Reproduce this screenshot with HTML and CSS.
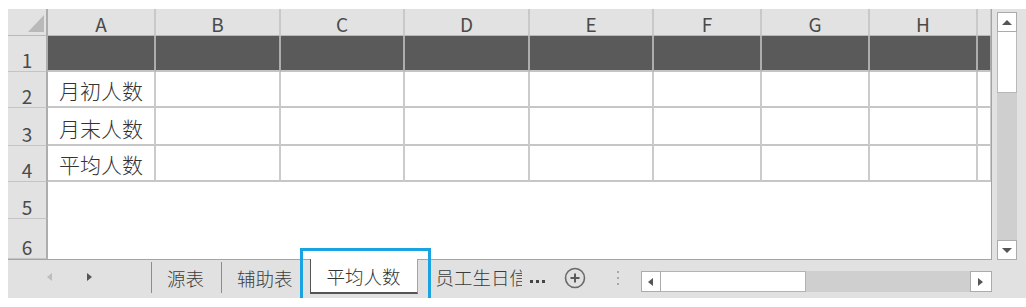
FILE: index.html
```html
<!DOCTYPE html>
<html lang="zh-CN">
<head>
  <meta charset="UTF-8" />
  <meta name="viewport" content="width=device-width, initial-scale=1" />
  <title>平均人数</title>
  <link rel="stylesheet" href="styles.css">
</head>
<body>

  <div class="app">
    <div class="main">
      <div class="grid">
        <table class="sheet">
          <colgroup>
            <col class="c-num"><col class="c-a"><col class="c-w"><col class="c-v"><col class="c-w"><col class="c-v">
            <col class="c-a"><col class="c-a"><col class="c-a"><col class="c-i">
          </colgroup>
          <thead>
            <tr class="head">
              <th class="corner"><div class="corner-tri"></div></th>
              <th>A</th><th>B</th><th>C</th><th>D</th><th>E</th><th>F</th><th>G</th><th>H</th><th></th>
            </tr>
          </thead>
          <tbody>
            <tr class="fill r36">
              <th class="num">1</th>
              <td></td><td></td><td></td><td></td><td></td><td></td><td></td><td></td><td></td>
            </tr>
            <tr class="data r36">
              <th class="num">2</th>
              <td class="label">月初人数</td><td></td><td></td><td></td><td></td><td></td><td></td><td></td><td></td>
            </tr>
            <tr class="data r38">
              <th class="num">3</th>
              <td class="label">月末人数</td><td></td><td></td><td></td><td></td><td></td><td></td><td></td><td></td>
            </tr>
            <tr class="data r36">
              <th class="num">4</th>
              <td class="label">平均人数</td><td></td><td></td><td></td><td></td><td></td><td></td><td></td><td></td>
            </tr>
            <tr class="blank r37">
              <th class="num">5</th>
              <td></td><td></td><td></td><td></td><td></td><td></td><td></td><td></td><td></td>
            </tr>
            <tr class="blank r40">
              <th class="num">6</th>
              <td></td><td></td><td></td><td></td><td></td><td></td><td></td><td></td><td></td>
            </tr>
          </tbody>
        </table>
      </div>

      <div class="vscroll">
        <div class="vtrack">
          <div class="sbtn"><span class="tri-up"></span></div>
          <div class="vthumb"></div>
          <div class="spacer"></div>
          <div class="sbtn"><span class="tri-down"></span></div>
        </div>
      </div>
    </div>

    <div class="tabbar">
      <div class="nav">
        <span class="tri-left off"></span>
        <span class="tri-right"></span>
      </div>
      <div class="tab plain">源表</div>
      <div class="tab plain">辅助表</div>
      <div class="tab active">平均人数</div>
      <div class="tab cut">员工生日信息</div>
      <div class="more"><i></i><i></i><i></i></div>
      <div class="add">
        <svg width="22" height="22" viewBox="0 0 22 22">
          <circle cx="11" cy="11" r="9.5" fill="none" stroke="#6a6a6a" stroke-width="1.6"/>
          <path d="M11 6.5v9M6.5 11h9" stroke="#5a5a5a" stroke-width="2"/>
        </svg>
      </div>
      <div class="vdots"><i></i><i></i><i></i></div>
      <div class="hscroll">
        <div class="sbtn wide"><span class="tri-left small"></span></div>
        <div class="hthumb"></div>
        <div class="spacer"></div>
        <div class="sbtn end"><span class="tri-right small"></span></div>
      </div>
    </div>

    <div class="focus"></div>
  </div>

</body>
</html>
```

FILE: styles.css
```css
body {
  margin: 0;
  background: #fff;
  font-family: "Noto Sans CJK SC", "Liberation Sans", sans-serif;
  color: #333;
}

.app {
  position: relative;
  margin: 9px 0 0 8px;
  width: 1018px;
}

.main {
  display: flex;
  height: 251px;
}

/* sheet grid */
.grid {
  width: 984px;
  height: 251px;
  box-sizing: border-box;
  overflow: hidden;
  border-right: 1px solid #a4a4a4;
  border-bottom: 1px solid #a4a4a4;
  background: #fff;
}

.sheet {
  width: 983px;
  table-layout: fixed;
  border-spacing: 0;
}

.c-num { width: 40px; }
.c-a { width: 108px; }
.c-w { width: 125px; }
.c-v { width: 124px; }
.c-i { width: 14px; }

.sheet th,
.sheet td {
  padding: 0;
  box-sizing: border-box;
  vertical-align: bottom;
}

.head { height: 27px; }
.r36 { height: 36px; }
.r37 { height: 37px; }
.r38 { height: 38px; }
.r40 { height: 40px; }

.head th {
  background: #e2e2e2;
  border-right: 2px solid #c9c9c9;
  border-bottom: 1px solid #b8b8b8;
  font-weight: normal;
  font-size: 19px;
  line-height: 22px;
  color: #4a4a4a;
  text-align: center;
}

.head th.corner {
  border-right: 2px solid #adadad;
  padding: 0 2px 3px 0;
}

.corner-tri {
  width: 16px;
  height: 17px;
  margin-left: auto;
  background: #b9b9b9;
  clip-path: polygon(100% 0, 100% 100%, 0 100%);
}

.sheet th.num {
  background: #e2e2e2;
  border-right: 2px solid #adadad;
  border-bottom: 1px solid #c4c4c4;
  font-weight: normal;
  font-size: 19px;
  line-height: 22px;
  color: #4a4a4a;
  text-align: center;
}

.fill td {
  background: #5a5a5a;
  border-right: 2px solid #adadad;
  border-bottom: 2px solid #c4c4c4;
}

.data td {
  border-right: 2px solid #cbcbcb;
  border-bottom: 2px solid #c6c6c6;
}

.label {
  font-size: 21px;
  font-weight: 300;
  line-height: 26px;
  text-align: center;
  padding-bottom: 3px !important;
  color: #333;
  white-space: nowrap;
}

/* vertical scrollbar */
.vscroll {
  width: 34px;
  background: #e2e2e2;
  padding: 3px 0 0 5px;
  box-sizing: border-box;
  display: flex;
}

.vtrack {
  width: 20px;
  background: #cfcfcf;
  display: flex;
  flex-direction: column;
}

.sbtn {
  width: 20px;
  height: 20px;
  flex: none;
  box-sizing: border-box;
  background: #fff;
  border: 1px solid #ababab;
  display: flex;
  align-items: center;
  justify-content: center;
}

.vthumb {
  height: 61px;
  background: #fff;
  border: 1px solid #b8b8b8;
  border-top: none;
  box-sizing: border-box;
}

.spacer {
  flex: 1;
}

.tri-up {
  border-left: 5px solid transparent;
  border-right: 5px solid transparent;
  border-bottom: 5px solid #555;
}

.tri-down {
  border-left: 5px solid transparent;
  border-right: 5px solid transparent;
  border-top: 5px solid #555;
}

.tri-left {
  border-top: 4px solid transparent;
  border-bottom: 4px solid transparent;
  border-right: 5px solid #555;
}

.tri-right {
  border-top: 4px solid transparent;
  border-bottom: 4px solid transparent;
  border-left: 5px solid #555;
}

.tri-left.off {
  border-right-color: #bdbdbd;
}

.small {
  border-top-width: 4px;
  border-bottom-width: 4px;
}

/* sheet tabs */
.tabbar {
  display: flex;
  height: 38px;
  background: #e1e1e1;
  font-size: 18.5px;
  font-weight: 300;
  color: #3c3c3c;
}

.nav {
  width: 143px;
  display: flex;
  align-items: center;
  gap: 35px;
  padding: 0 0 4px 39px;
  box-sizing: border-box;
}

.tab {
  display: flex;
  align-items: center;
  white-space: nowrap;
}

.tab.plain {
  border-left: 1px solid #8c8c8c;
  margin: 2px 0 5px;
  padding: 0 17px 0 15px;
}

.tab.active {
  position: relative;
  width: 108px;
  margin: -1px 0 4px;
  justify-content: center;
  background: #fff;
  color: #333;
  border-left: 1px solid #555;
  border-right: 1px solid #a3a3a3;
  border-bottom: 2px solid #555;
  box-sizing: border-box;
}

.tab.cut {
  width: 104px;
  padding-left: 18px;
  margin-bottom: 5px;
  overflow: hidden;
  box-sizing: border-box;
}

.more {
  margin-left: 8px;
  display: flex;
  gap: 3px;
  align-items: center;
  padding-top: 4px;
}

.more i {
  width: 3px;
  height: 3px;
  background: #444;
}

.add {
  margin-left: 19px;
  display: flex;
  align-items: center;
  padding-bottom: 2px;
}

.vdots {
  margin-left: 31px;
  display: flex;
  flex-direction: column;
  justify-content: center;
  gap: 4px;
  padding-bottom: 2px;
}

.vdots i {
  width: 2px;
  height: 2px;
  background: #aaa;
}

.hscroll {
  margin: 11px 0 0 22px;
  width: 351px;
  height: 21px;
  display: flex;
  background: #cfcfcf;
}

.hscroll .sbtn {
  height: 21px;
}

.hscroll .sbtn.end {
  width: 22px;
}

.hthumb {
  width: 145px;
  background: #fff;
  border: 1px solid #b3b3b3;
  border-left: none;
  box-sizing: border-box;
}

/* highlight around the active sheet */
.focus {
  position: absolute;
  left: 292px;
  top: 239px;
  width: 131px;
  height: 55px;
  box-sizing: border-box;
  border: 3px solid #19a3e0;
}
```
